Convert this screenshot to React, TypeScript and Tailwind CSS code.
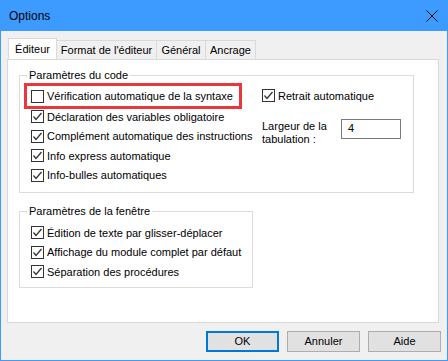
import React from 'react';

const font = { fontFamily: '"Liberation Sans", Arial, sans-serif' };

const Check = ({ checked }: { checked: boolean }) => (
    <span className="w-[13px] h-[13px] border border-[#333333] bg-white flex items-center justify-center shrink-0">
        {checked && (
            <svg width="11" height="11" viewBox="0 0 11 11">
                <path d="M1.5 5.5 L4 8.5 L9.5 2" fill="none" stroke="#333333" strokeWidth="1.3" />
            </svg>
        )}
    </span>
);

const Row = ({ label, checked = true }: { label: string; checked?: boolean }) => (
    <div className="h-[19.5px] flex items-center gap-[3px] whitespace-nowrap">
        <Check checked={checked} />
        <span>{label}</span>
    </div>
);

const Tab = ({ label, width, active }: { label: string; width: string; active?: boolean }) =>
    active ? (
        <div className={width + ' h-[21px] bg-white border border-b-0 border-[#d9d9d9] flex items-center justify-center relative z-10 -mb-px'}>
            {label}
        </div>
    ) : (
        <div className={width + ' h-[19px] mt-[2px] bg-[#f0f0f0] border border-b-0 border-l-0 border-[#d9d9d9] flex items-center justify-center whitespace-nowrap'}>
            {label}
        </div>
    );

const Btn = ({ label, primary }: { label: string; primary?: boolean }) => (
    <button
        className={
            'w-[73px] h-[21px] bg-[#e1e1e1] flex items-center justify-center ' +
            (primary ? 'border-2 border-[#0078d7]' : 'border border-[#adadad]')
        }
    >
        {label}
    </button>
);

export default function App() {
    return (
        <div style={font} className="w-[448px] h-[361px] bg-[#f0f0f0] text-[11px] text-black flex flex-col border border-t-0 border-[#3d9bff]">
            <div className="h-[31px] bg-[#3d9bff] flex items-center justify-between pl-[9px] pr-[10px] -mx-px">
                <span className="text-[12px]">Options</span>
                <svg width="12" height="12" viewBox="0 0 12 12">
                    <path d="M0.5 0.5 L11.5 11.5 M11.5 0.5 L0.5 11.5" stroke="#000" strokeWidth="1" />
                </svg>
            </div>

            <div className="pl-[6px] pt-[7px] flex flex-col">
                <div className="flex items-start pl-[1px]">
                    <Tab label="Éditeur" width="w-[49px]" active />
                    <Tab label="Format de l'éditeur" width="w-[100px]" />
                    <Tab label="Général" width="w-[49px]" />
                    <Tab label="Ancrage" width="w-[50px]" />
                </div>

                <div className="w-[432px] h-[264px] bg-white border border-[#d9d9d9] pt-[8px] pl-[11px]">
                    <fieldset className="w-[395px] h-[125px] border border-[#dcdcdc] px-[11px] pb-0 m-0">
                        <legend className="px-[2px] -ml-[4px] leading-[14px]">Paramètres du code</legend>
                        <div className="flex">
                            <div className="flex flex-col w-[231px] pt-[1px]">
                                <div className="-ml-[7px] w-[218px] border-[3px] border-[#e8383d] h-[26px] pl-[4px] flex items-center mb-[-2px]">
                                    <div className="flex items-center gap-[3px] whitespace-nowrap">
                                        <Check checked={false} />
                                        <span>Vérification automatique de la syntaxe</span>
                                    </div>
                                </div>
                                <Row label="Déclaration des variables obligatoire" />
                                <Row label="Complément automatique des instructions" />
                                <Row label="Info express automatique" />
                                <Row label="Info-bulles automatiques" />
                            </div>
                            <div className="flex flex-col pt-[4px]">
                                <Row label="Retrait automatique" />
                                <div className="flex mt-[13px]">
                                    <div className="w-[79px] leading-[13px] pt-[1px]">
                                        Largeur de la
                                        <br />
                                        tabulation :
                                    </div>
                                    <div className="w-[60px] h-[20px] border border-[#7a7a7a] pl-[6px] flex items-center">4</div>
                                </div>
                            </div>
                        </div>
                    </fieldset>

                    <fieldset className="mt-[11px] w-[234px] h-[84px] border border-[#dcdcdc] px-[11px] m-0">
                        <legend className="px-[2px] -ml-[4px] leading-[14px]">Paramètres de la fenêtre</legend>
                        <div className="flex flex-col pt-[5px]">
                            <Row label="Édition de texte par glisser-déplacer" />
                            <Row label="Affichage du module complet par défaut" />
                            <Row label="Séparation des procédures" />
                        </div>
                    </fieldset>
                </div>
            </div>

            <div className="flex justify-end gap-[8px] pr-[6px] mt-[8px]">
                <Btn label="OK" primary />
                <Btn label="Annuler" />
                <Btn label="Aide" />
            </div>
        </div>
    );
}
